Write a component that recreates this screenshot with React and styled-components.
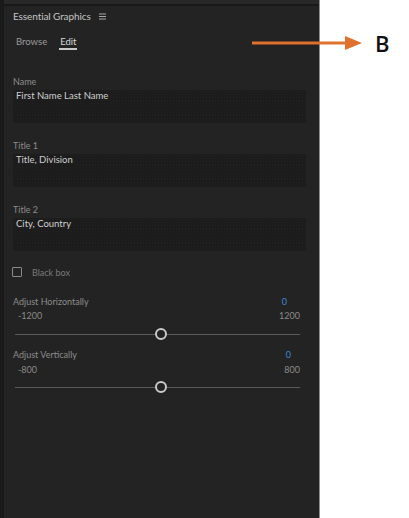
import React from "react";
import styled, { createGlobalStyle } from "styled-components";

const GlobalStyle = createGlobalStyle`
  html, body {
    margin: 0;
    padding: 0;
    background: #ffffff;
  }
  body {
    font-family: Lato, "Noto Sans", sans-serif;
  }
`;

const Page = styled.div`
  position: relative;
  display: flex;
  width: 409px;
  height: 518px;
  overflow: hidden;
`;

const Panel = styled.section`
  width: 320px;
  height: 518px;
  box-sizing: border-box;
  background: #232323;
  border-left: 4px solid #1a1a1a;
  border-right: 1px solid #8e8e8e;
  display: flex;
  flex-direction: column;
`;

const TopStrip = styled.div`
  height: 4px;
  background: #282828;
  border-bottom: 2px solid #191919;
`;

const Header = styled.div`
  display: flex;
  align-items: center;
  gap: 8px;
  padding: 4px 0 0 9px;
  height: 12px;
  font-size: 10px;
  color: #c4c4c4;
  letter-spacing: -0.1px;
`;

const Tabs = styled.div`
  display: flex;
  gap: 11px;
  padding-left: 11px;
  margin-top: 14px;
`;

const Tab = styled.div`
  font-size: 9.5px;
  line-height: 12px;
  color: ${(p) => (p.$active ? "#d8d8d8" : "#9a9a9a")};
  border-bottom: 2px solid ${(p) => (p.$active ? "#c8c8c8" : "transparent")};
  padding: 0 1px;
`;

const Body = styled.div`
  padding: 0 13px 0 9px;
  display: flex;
  flex-direction: column;
  margin-top: 26px;
`;

const Label = styled.div`
  font-size: 9px;
  line-height: 12px;
  color: #8c8c8c;
  margin-top: ${(p) => p.$top || 0}px;
`;

const TextBox = styled.div`
  margin-top: 2px;
  height: 33px;
  box-sizing: border-box;
  background-color: #1c1c1c;
  background-image: radial-gradient(#222 0.6px, transparent 0.7px);
  background-size: 3px 3px;
  padding: 0 3px;
  font-size: 9.5px;
  line-height: 11px;
  color: #cfcfcf;
`;

const CheckRow = styled.label`
  display: flex;
  align-items: center;
  gap: 10px;
  margin-top: 15px;
  height: 12px;
  font-size: 9px;
  color: #7a7a7a;
`;

const CheckBox = styled.span`
  width: 8px;
  height: 8px;
  margin-left: -1px;
  border: 1.5px solid #8a8a8a;
  border-radius: 1px;
`;

const RowBetween = styled.div`
  display: flex;
  justify-content: space-between;
  align-items: center;
  height: 12px;
  margin-top: ${(p) => p.$top || 0}px;
  padding: ${(p) => p.$pad || "0"};
`;

const SliderLabel = styled.span`
  font-size: 9px;
  color: #8c8c8c;
`;

const Value = styled.span`
  font-size: 9px;
  color: #3d85d6;
`;

const RangeText = styled.span`
  font-size: 9px;
  color: #8a8a8a;
`;

const Slider = styled.div`
  position: relative;
  margin: ${(p) => p.$top}px 6px 0 2px;
  height: 12px;
  display: flex;
  align-items: center;
`;

const Track = styled.div`
  flex: 1;
  height: 1px;
  background: #5a5a5a;
`;

const Thumb = styled.div`
  position: absolute;
  top: 0;
  width: 8px;
  height: 8px;
  border: 2px solid #c9c9c9;
  border-radius: 50%;
  background: #232323;
  transform: translateX(calc(-50% + 3px));
`;

const Callout = styled.svg`
  position: absolute;
  left: 252px;
  top: 36px;
`;

const Letter = styled.div`
  position: absolute;
  left: 375px;
  top: 28px;
  font-family: "Open Sans", "Liberation Sans", sans-serif;
  font-weight: 600;
  font-size: 22px;
  color: #111;
`;

const Menu = () => (
  <svg width="7" height="7" viewBox="0 0 7 7">
    <path d="M0 1h7M0 3.5h7M0 6h7" stroke="#a8a8a8" strokeWidth="1" />
  </svg>
);

const SliderField = ({ label, min, max, value, top, rangeTop, sliderTop, valuePad }) => {
  const pct = ((value - min) / (max - min)) * 100;
  return (
    <>
      <RowBetween $top={top} $pad={`0 ${valuePad}px 0 0`}>
        <SliderLabel>{label}</SliderLabel>
        <Value>{value}</Value>
      </RowBetween>
      <RowBetween $top={rangeTop} $pad="0 6px 0 5px">
        <RangeText>{min}</RangeText>
        <RangeText>{max}</RangeText>
      </RowBetween>
      <Slider $top={sliderTop}>
        <Track />
        <Thumb style={{ left: `${pct}%` }} />
      </Slider>
    </>
  );
};

export default function App() {
  return (
    <Page>
      <GlobalStyle />
      <Panel>
        <TopStrip />
        <Header>
          <span>Essential Graphics</span>
          <Menu />
        </Header>
        <Tabs>
          <Tab>Browse</Tab>
          <Tab $active>Edit</Tab>
        </Tabs>
        <Body>
          <Label>Name</Label>
          <TextBox>First Name Last Name</TextBox>
          <Label $top={17}>Title 1</Label>
          <TextBox>Title, Division</TextBox>
          <Label $top={17}>Title 2</Label>
          <TextBox>City, Country</TextBox>
          <CheckRow>
            <CheckBox />
            Black box
          </CheckRow>
          <SliderField label="Adjust Horizontally" min={-1200} max={1200} value={0} top={17} rangeTop={2} sliderTop={7} valuePad={19} />
          <SliderField label="Adjust Vertically" min={-800} max={800} value={0} top={8} rangeTop={3} sliderTop={6} valuePad={15} />
        </Body>
      </Panel>
      <Callout width="112" height="15" viewBox="0 0 112 15">
        <line x1="0" y1="7" x2="96" y2="7" stroke="#e0702e" strokeWidth="3" />
        <polygon points="93,0 110,7 93,14" fill="#e0702e" />
      </Callout>
      <Letter>B</Letter>
    </Page>
  );
}
